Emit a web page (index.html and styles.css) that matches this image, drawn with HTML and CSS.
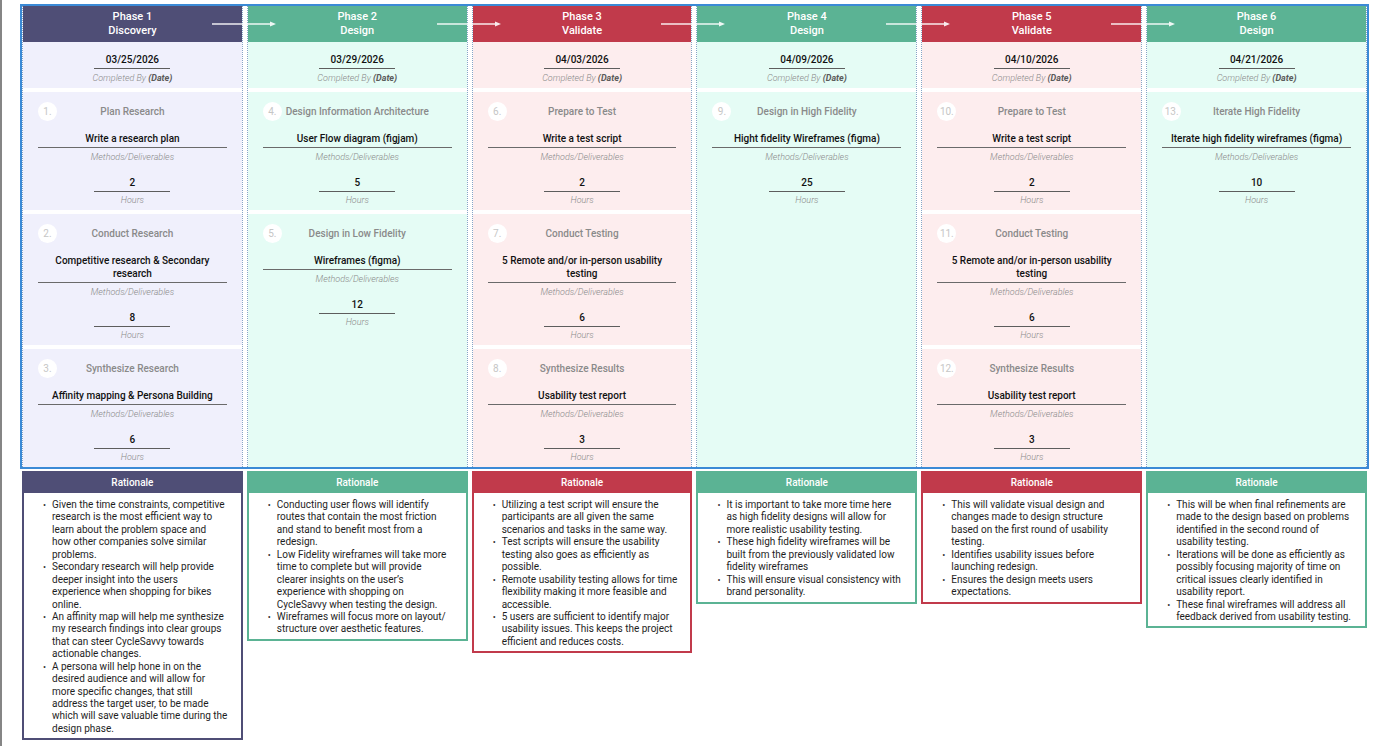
FILE: index.html
```html
<!DOCTYPE html>
<html lang="en">
<head>
<meta charset="utf-8">
<title>Project Timeline</title>
<link rel="stylesheet" href="styles.css">
</head>
<body>
<div class="page">
  <div class="board">
    <section class="col purple">
      <header class="phase-head"><div>Phase 1</div><div>Discovery</div>
        <svg class="arrow" width="64" height="8" viewBox="0 0 64 8"><line x1="0" y1="4" x2="59" y2="4" stroke="#fff" stroke-width="1.3"/><path d="M58 1.6 L64 4 L58 6.4 Z" fill="#fff"/></svg>
      </header>
      <div class="date-block"><div class="date">03/25/2026</div><div class="date-label">Completed By <b>(Date)</b></div></div>
      <div class="card">
        <div class="task-row"><span class="num">1.</span><span class="task">Plan Research</span></div>
        <div class="deliv">Write a research plan</div>
        <div class="label">Methods/Deliverables</div>
        <div class="hours">2</div>
        <div class="label">Hours</div>
      </div>
      <div class="card">
        <div class="task-row"><span class="num">2.</span><span class="task">Conduct Research</span></div>
        <div class="deliv">Competitive research &amp; Secondary research</div>
        <div class="label">Methods/Deliverables</div>
        <div class="hours">8</div>
        <div class="label">Hours</div>
      </div>
      <div class="card">
        <div class="task-row"><span class="num">3.</span><span class="task">Synthesize Research</span></div>
        <div class="deliv">Affinity mapping &amp; Persona Building</div>
        <div class="label">Methods/Deliverables</div>
        <div class="hours">6</div>
        <div class="label">Hours</div>
      </div>
    </section>

    <section class="col green">
      <header class="phase-head"><div>Phase 2</div><div>Design</div>
        <svg class="arrow" width="64" height="8" viewBox="0 0 64 8"><line x1="0" y1="4" x2="59" y2="4" stroke="#fff" stroke-width="1.3"/><path d="M58 1.6 L64 4 L58 6.4 Z" fill="#fff"/></svg>
      </header>
      <div class="date-block"><div class="date">03/29/2026</div><div class="date-label">Completed By <b>(Date)</b></div></div>
      <div class="card">
        <div class="task-row"><span class="num">4.</span><span class="task">Design Information Architecture</span></div>
        <div class="deliv">User Flow diagram (figjam)</div>
        <div class="label">Methods/Deliverables</div>
        <div class="hours">5</div>
        <div class="label">Hours</div>
      </div>
      <div class="card">
        <div class="task-row"><span class="num">5.</span><span class="task">Design in Low Fidelity</span></div>
        <div class="deliv">Wireframes (figma)</div>
        <div class="label">Methods/Deliverables</div>
        <div class="hours">12</div>
        <div class="label">Hours</div>
      </div>
    </section>

    <section class="col red">
      <header class="phase-head"><div>Phase 3</div><div>Validate</div>
        <svg class="arrow" width="64" height="8" viewBox="0 0 64 8"><line x1="0" y1="4" x2="59" y2="4" stroke="#fff" stroke-width="1.3"/><path d="M58 1.6 L64 4 L58 6.4 Z" fill="#fff"/></svg>
      </header>
      <div class="date-block"><div class="date">04/03/2026</div><div class="date-label">Completed By <b>(Date)</b></div></div>
      <div class="card">
        <div class="task-row"><span class="num">6.</span><span class="task">Prepare to Test</span></div>
        <div class="deliv">Write a test script</div>
        <div class="label">Methods/Deliverables</div>
        <div class="hours">2</div>
        <div class="label">Hours</div>
      </div>
      <div class="card">
        <div class="task-row"><span class="num">7.</span><span class="task">Conduct Testing</span></div>
        <div class="deliv">5 Remote and/or in-person usability testing</div>
        <div class="label">Methods/Deliverables</div>
        <div class="hours">6</div>
        <div class="label">Hours</div>
      </div>
      <div class="card">
        <div class="task-row"><span class="num">8.</span><span class="task">Synthesize Results</span></div>
        <div class="deliv">Usability test report</div>
        <div class="label">Methods/Deliverables</div>
        <div class="hours">3</div>
        <div class="label">Hours</div>
      </div>
    </section>

    <section class="col green">
      <header class="phase-head"><div>Phase 4</div><div>Design</div>
        <svg class="arrow" width="64" height="8" viewBox="0 0 64 8"><line x1="0" y1="4" x2="59" y2="4" stroke="#fff" stroke-width="1.3"/><path d="M58 1.6 L64 4 L58 6.4 Z" fill="#fff"/></svg>
      </header>
      <div class="date-block"><div class="date">04/09/2026</div><div class="date-label">Completed By <b>(Date)</b></div></div>
      <div class="card">
        <div class="task-row"><span class="num">9.</span><span class="task">Design in High Fidelity</span></div>
        <div class="deliv">Hight fidelity Wireframes (figma)</div>
        <div class="label">Methods/Deliverables</div>
        <div class="hours">25</div>
        <div class="label">Hours</div>
      </div>
    </section>

    <section class="col red">
      <header class="phase-head"><div>Phase 5</div><div>Validate</div>
        <svg class="arrow" width="64" height="8" viewBox="0 0 64 8"><line x1="0" y1="4" x2="59" y2="4" stroke="#fff" stroke-width="1.3"/><path d="M58 1.6 L64 4 L58 6.4 Z" fill="#fff"/></svg>
      </header>
      <div class="date-block"><div class="date">04/10/2026</div><div class="date-label">Completed By <b>(Date)</b></div></div>
      <div class="card">
        <div class="task-row"><span class="num">10.</span><span class="task">Prepare to Test</span></div>
        <div class="deliv">Write a test script</div>
        <div class="label">Methods/Deliverables</div>
        <div class="hours">2</div>
        <div class="label">Hours</div>
      </div>
      <div class="card">
        <div class="task-row"><span class="num">11.</span><span class="task">Conduct Testing</span></div>
        <div class="deliv">5 Remote and/or in-person usability testing</div>
        <div class="label">Methods/Deliverables</div>
        <div class="hours">6</div>
        <div class="label">Hours</div>
      </div>
      <div class="card">
        <div class="task-row"><span class="num">12.</span><span class="task">Synthesize Results</span></div>
        <div class="deliv">Usability test report</div>
        <div class="label">Methods/Deliverables</div>
        <div class="hours">3</div>
        <div class="label">Hours</div>
      </div>
    </section>

    <section class="col green">
      <header class="phase-head"><div>Phase 6</div><div>Design</div></header>
      <div class="date-block"><div class="date">04/21/2026</div><div class="date-label">Completed By <b>(Date)</b></div></div>
      <div class="card">
        <div class="task-row"><span class="num">13.</span><span class="task">Iterate High Fidelity</span></div>
        <div class="deliv">Iterate high fidelity wireframes (figma)</div>
        <div class="label">Methods/Deliverables</div>
        <div class="hours">10</div>
        <div class="label">Hours</div>
      </div>
    </section>
  </div>

  <div class="rationales">
    <div class="rat purple">
      <div class="rat-head">Rationale</div>
      <ul>
        <li>Given the time constraints, competitive<br>research is the most efficient way to<br>learn about the problem space and<br>how other companies solve similar<br>problems.</li>
        <li>Secondary research will help provide<br>deeper insight into the users<br>experience when shopping for bikes<br>online.</li>
        <li>An affinity map will help me synthesize<br>my research findings into clear groups<br>that can steer CycleSavvy towards<br>actionable changes.</li>
        <li>A persona will help hone in on the<br>desired audience and will allow for<br>more specific changes, that still<br>address the target user, to be made<br>which will save valuable time during the<br>design phase.</li>
      </ul>
    </div>
    <div class="rat green">
      <div class="rat-head">Rationale</div>
      <ul>
        <li>Conducting user flows will identify<br>routes that contain the most friction<br>and stand to benefit most from a<br>redesign.</li>
        <li>Low Fidelity wireframes will take more<br>time to complete but will provide<br>clearer insights on the user’s<br>experience with shopping on<br>CycleSavvy when testing the design.</li>
        <li>Wireframes will focus more on layout/<br>structure over aesthetic features.</li>
      </ul>
    </div>
    <div class="rat red">
      <div class="rat-head">Rationale</div>
      <ul>
        <li>Utilizing a test script will ensure the<br>participants are all given the same<br>scenarios and tasks in the same way.</li>
        <li>Test scripts will ensure the usability<br>testing also goes as efficiently as<br>possible.</li>
        <li>Remote usability testing allows for time<br>flexibility making it more feasible and<br>accessible.</li>
        <li>5 users are sufficient to identify major<br>usability issues. This keeps the project<br>efficient and reduces costs.</li>
      </ul>
    </div>
    <div class="rat green">
      <div class="rat-head">Rationale</div>
      <ul>
        <li>It is important to take more time here<br>as high fidelity designs will allow for<br>more realistic usability testing.</li>
        <li>These high fidelity wireframes will be<br>built from the previously validated low<br>fidelity wireframes</li>
        <li>This will ensure visual consistency with<br>brand personality.</li>
      </ul>
    </div>
    <div class="rat red">
      <div class="rat-head">Rationale</div>
      <ul>
        <li>This will validate visual design and<br>changes made to design structure<br>based on the first round of usability<br>testing.</li>
        <li>Identifies usability issues before<br>launching redesign.</li>
        <li>Ensures the design meets users<br>expectations.</li>
      </ul>
    </div>
    <div class="rat green">
      <div class="rat-head">Rationale</div>
      <ul>
        <li>This will be when final refinements are<br>made to the design based on problems<br>identified in the second round of<br>usability testing.</li>
        <li>Iterations will be done as efficiently as<br>possibly focusing majority of time on<br>critical issues clearly identified in<br>usability report.</li>
        <li>These final wireframes will address all<br>feedback derived from usability testing.</li>
      </ul>
    </div>
  </div>
</div>
</body>
</html>
```

FILE: styles.css
```css
* { box-sizing: border-box; }

html, body {
  margin: 0;
  padding: 0;
  background: #ffffff;
}

body {
  font-family: Roboto, "Liberation Sans", Arial, sans-serif;
  color: #1c1c1c;
}

.page {
  min-height: 746px;
  border-left: 2px solid #858585;
  padding: 4px 0 0 18px;
}

.purple { --c: #4f4e76; --bg: #f0f0fc; }
.green  { --c: #5bb394; --bg: #e5fcf5; }
.red    { --c: #c13a4b; --bg: #fdedee; }

/* ---------- board ---------- */
.board {
  width: 1349px;
  border: 2px solid #3b8ad6;
  display: grid;
  grid-template-columns: repeat(6, 1fr);
  column-gap: 4px;
  background: #ffffff;
}

.col {
  display: flex;
  flex-direction: column;
  background: var(--bg);
  background-clip: padding-box;
  border-left: 1px dotted #87a4c6;
  border-right: 1px dotted #87a4c6;
}

.phase-head {
  position: relative;
  height: 36px;
  background: var(--c);
  color: #ffffff;
  font-size: 11px;
  font-weight: 500;
  line-height: 14.5px;
  text-align: center;
  display: flex;
  flex-direction: column;
  justify-content: center;
}

.arrow {
  position: absolute;
  left: calc(100% - 30px);
  top: calc(50% - 4px);
  z-index: 2;
  opacity: 0.9;
}

.date-block {
  display: flex;
  flex-direction: column;
  align-items: center;
  padding: 11px 0 4px;
}

.date {
  width: 76px;
  text-align: center;
  font-size: 10px;
  font-weight: 500;
  line-height: 13px;
  color: #111111;
  padding-bottom: 2px;
  border-bottom: 1px solid #5d5d5d;
}

.date-label,
.label {
  margin-top: 3px;
  font-size: 9px;
  line-height: 12px;
  font-style: italic;
  font-weight: 300;
  color: #8a8a8a;
}

.date-label b {
  font-weight: 700;
  color: #5a5a5a;
}

/* ---------- task cards ---------- */
.card {
  border-top: 4px solid #ffffff;
  padding: 10px 15px 4px;
  display: flex;
  flex-direction: column;
  align-items: center;
}

.task-row {
  align-self: stretch;
  display: grid;
  grid-template-columns: 19px 1fr 19px;
  align-items: center;
  height: 19px;
}

.num {
  width: 19px;
  height: 19px;
  border-radius: 50%;
  background: #ffffff;
  color: #c6c6c6;
  font-size: 10px;
  line-height: 19px;
  text-align: center;
  white-space: nowrap;
}

.task {
  text-align: center;
  font-size: 10px;
  font-weight: 500;
  color: #8a8a8a;
  white-space: nowrap;
}

.deliv {
  align-self: stretch;
  margin-top: 11px;
  text-align: center;
  font-size: 10px;
  font-weight: 500;
  line-height: 13px;
  color: #111111;
  padding-bottom: 2px;
  border-bottom: 1px solid #6a6a6a;
}

.hours {
  width: 76px;
  margin-top: 13px;
  text-align: center;
  font-size: 10px;
  font-weight: 500;
  line-height: 13px;
  color: #111111;
  padding-bottom: 2px;
  border-bottom: 1px solid #5d5d5d;
}

.hours + .label {
  margin-top: 2px;
}

/* ---------- rationale ---------- */
.rationales {
  width: 1345px;
  margin: 2px 0 0 2px;
  display: grid;
  grid-template-columns: repeat(6, 1fr);
  column-gap: 4px;
  align-items: start;
}

.rat {
  border: 2px solid var(--c);
  background: #ffffff;
}

.rat-head {
  height: 20px;
  background: var(--c);
  color: #ffffff;
  font-size: 10px;
  font-weight: 500;
  line-height: 19px;
  text-align: center;
}

.rat ul {
  list-style: none;
  margin: 0;
  padding: 6px 4px 3px 19px;
  font-size: 10px;
  line-height: 12.43px;
  color: #1e1e1e;
}

.rat li {
  display: grid;
  grid-template-columns: 9px 1fr;
}

.rat li::before {
  content: "•";
  font-size: 9px;
  color: #333333;
}
```
